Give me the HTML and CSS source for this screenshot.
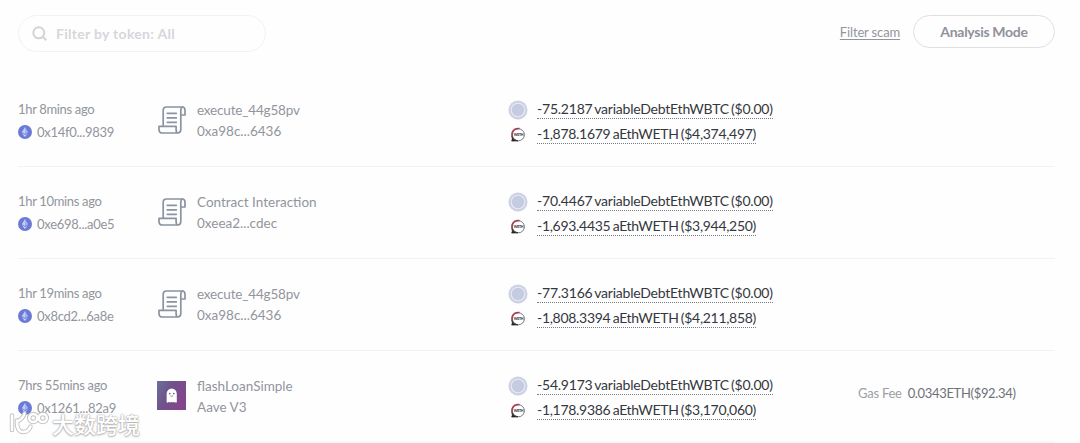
FILE: index.html
```html
<!DOCTYPE html>
<html lang="en">
<head>
<meta charset="utf-8">
<title>Transaction history</title>
<link rel="stylesheet" href="styles.css">
</head>
<body>
<svg class="defs" aria-hidden="true">
  <symbol id="eth" viewBox="0 0 14 14">
    <circle cx="7" cy="7" r="7" fill="#6a7ad6"/>
    <path d="M7 2 3.8 7.2 7 9Z" fill="#c3ccf6"/><path d="M7 2v7l3.2-1.8Z" fill="#a3b2ef"/>
    <path d="M3.9 8.1 7 12V9.9Z" fill="#dde3fc"/><path d="M10.1 8.1 7 12V9.9Z" fill="#b3c0f4"/>
  </symbol>
  <symbol id="scroll" viewBox="0 0 28 28">
    <g fill="none" stroke="#8b93a0" stroke-width="1.7" stroke-linejoin="round" stroke-linecap="round">
      <path d="M5.2 20.2V4.2Q5.2 1 8.4 1H24Q27 1 27 4.3V9H22.8"/>
      <path d="M24.6 1Q22.8 1.5 22.8 4V23.6Q22.8 27 19.6 27H4.6Q1 27 1 23.4V20.4H18.1V23.5Q18.1 27 20 27"/>
      <path d="M9.3 7.3h9M9.3 11.9h9M9.3 16.3h9"/>
    </g>
  </symbol>
  <symbol id="coin" viewBox="0 0 20 20">
    <circle cx="10" cy="10" r="9.5" fill="#ccd1e3"/>
    <circle cx="10" cy="10" r="6.8" fill="#c5cbe0" stroke="#e8eaf4" stroke-width="1.1"/>
  </symbol>
  <symbol id="weth" viewBox="0 0 16 16">
    <circle cx="8.4" cy="7.8" r="6" fill="#fff" stroke="#77777d" stroke-width="1"/>
    <path d="M9.5 1.5Q4 1 2.3 5.2 1.6 7.2 2.1 9.5" fill="none" stroke="#a93a55" stroke-width="1.6"/>
    <path d="M1.9 9.4Q3.4 13.4 8 13.9L1.7 14.1Q2.8 12.8 1.9 9.4Z" fill="#222" stroke="#222" stroke-width=".7"/>
    <text x="8.5" y="9.3" class="weth-label" textLength="9.6" lengthAdjust="spacingAndGlyphs">WETH</text>
  </symbol>
  <symbol id="mark" viewBox="0 0 42 28">
    <path d="M4 6.5V21"/><path d="M16.5 4.5Q15.5 9 9.5 12.5"/><path d="M9 11.5Q8.5 23 15.5 23 20.5 23 22.5 17.5"/>
    <circle cx="25.2" cy="9" r="4"/><circle cx="34.8" cy="9" r="4"/>
  </symbol>
</svg>

<header class="toolbar">
  <div class="search">
    <svg class="search-icon" viewBox="0 0 16 16"><circle cx="6.8" cy="6.8" r="5.5"/><path d="m10.9 10.9 3.4 3.4"/></svg>
    <span>Filter by token: All</span>
  </div>
  <div class="actions">
    <a class="scam">Filter scam</a>
    <button class="mode">Analysis Mode</button>
  </div>
</header>

<main class="list">
  <section class="row">
    <div class="when"><span class="time">1hr 8mins ago</span><span class="hash"><svg><use href="#eth"/></svg>0x14f0...9839</span></div>
    <div class="call"><svg class="kind"><use href="#scroll"/></svg><div class="names"><span class="method">execute_44g58pv</span><span>0xa98c...6436</span></div></div>
    <div class="tokens">
      <div class="token debt"><svg class="coin"><use href="#coin"/></svg><span>-75.2187 variableDebtEthWBTC ($0.00)</span></div>
      <div class="token"><svg class="weth"><use href="#weth"/></svg><span>-1,878.1679 aEthWETH ($4,374,497)</span></div>
    </div>
  </section>
  <section class="row">
    <div class="when"><span class="time">1hr 10mins ago</span><span class="hash"><svg><use href="#eth"/></svg>0xe698...a0e5</span></div>
    <div class="call"><svg class="kind"><use href="#scroll"/></svg><div class="names"><span>Contract Interaction</span><span>0xeea2...cdec</span></div></div>
    <div class="tokens">
      <div class="token debt"><svg class="coin"><use href="#coin"/></svg><span>-70.4467 variableDebtEthWBTC ($0.00)</span></div>
      <div class="token"><svg class="weth"><use href="#weth"/></svg><span>-1,693.4435 aEthWETH ($3,944,250)</span></div>
    </div>
  </section>
  <section class="row">
    <div class="when"><span class="time">1hr 19mins ago</span><span class="hash"><svg><use href="#eth"/></svg>0x8cd2...6a8e</span></div>
    <div class="call"><svg class="kind"><use href="#scroll"/></svg><div class="names"><span class="method">execute_44g58pv</span><span>0xa98c...6436</span></div></div>
    <div class="tokens">
      <div class="token debt"><svg class="coin"><use href="#coin"/></svg><span>-77.3166 variableDebtEthWBTC ($0.00)</span></div>
      <div class="token"><svg class="weth"><use href="#weth"/></svg><span>-1,808.3394 aEthWETH ($4,211,858)</span></div>
    </div>
  </section>
  <section class="row">
    <div class="when"><span class="time">7hrs 55mins ago</span><span class="hash"><svg><use href="#eth"/></svg>0x1261...82a9</span></div>
    <div class="call">
      <svg class="kind protocol" viewBox="0 0 28 28">
        <defs><linearGradient id="aave" x1="0" y1="0" x2="1" y2=".5"><stop offset="0" stop-color="#6b7098"/><stop offset=".5" stop-color="#70518c"/><stop offset="1" stop-color="#84468b"/></linearGradient></defs>
        <path fill="url(#aave)" d="M0 0h28v28H0z"/>
        <path fill="#fff" d="M9.3 20.5V12.5a4.9 5.3 0 0 1 9.8 0V20.5q-1 1-1.8-.4-.8 1.4-1.6 0-.8 1.4-1.6 0-.8 1.4-1.6 0-.8 1.4-1.6 0-.6 1.4-1.6.4Z"/>
        <circle cx="12.3" cy="12.2" r=".8" fill="#70518c"/><circle cx="16.2" cy="12.2" r=".8" fill="#70518c"/>
        <path d="M12.9 14.3q1.3 1 2.6 0" fill="none" stroke="#70518c" stroke-width=".7"/>
      </svg>
      <div class="names"><span>flashLoanSimple</span><span>Aave V3</span></div>
    </div>
    <div class="tokens">
      <div class="token debt"><svg class="coin"><use href="#coin"/></svg><span>-54.9173 variableDebtEthWBTC ($0.00)</span></div>
      <div class="token"><svg class="weth"><use href="#weth"/></svg><span>-1,178.9386 aEthWETH ($3,170,060)</span></div>
    </div>
    <div class="gas"><span class="gas-label">Gas Fee</span><span class="gas-value">0.0343ETH($92.34)</span></div>
  </section>
</main>

<div class="watermark">
  <svg viewBox="0 0 42 28"><use href="#mark" class="mark-edge"/><use href="#mark" class="mark-fill"/></svg>
  <span lang="zh">大数跨境</span>
</div>
</body>
</html>
```
FILE: styles.css
```css
* { box-sizing: border-box; }
body {
  margin: 0;
  height: 443px;
  overflow: hidden;
  background: #fefefe;
  color: #92959c;
  font: 13px/20px Lato, sans-serif;
}
.defs { position: absolute; width: 0; height: 0; }
.weth-label { font: 900 3.8px Lato, sans-serif; text-anchor: middle; fill: #333; }

.toolbar {
  display: flex;
  justify-content: space-between;
  align-items: flex-start;
  height: 75px;
  padding: 15px 25px 0 18px;
}
.search {
  display: flex;
  align-items: center;
  gap: 8px;
  width: 248px;
  height: 37px;
  padding-left: 13px;
  border: 1px solid #f2f2f3;
  border-radius: 19px;
  color: #d6d7da;
  font-size: 14px;
  font-weight: 700;
  letter-spacing: .3px;
}
.search-icon { width: 16px; height: 16px; fill: none; stroke: #d3d4d7; stroke-width: 2; }
.actions { display: flex; align-items: center; gap: 13px; }
.scam { letter-spacing: -.15px; text-decoration: underline; text-underline-offset: 2px; }
.mode {
  width: 142px;
  height: 33px;
  padding: 0;
  border: 1px solid #dfe0e2;
  border-radius: 17px;
  background: none;
  color: #8f929a;
  font: 700 14px/20px Lato, sans-serif;
  letter-spacing: -.3px;
}

.list { padding: 0 25px 0 18px; }
.row {
  display: grid;
  grid-template-columns: 139px 351px 350px 1fr;
  align-items: center;
  height: 92px;
  border-bottom: 1px solid #f2f2f3;
}
.row:last-child { height: 92px; padding-top: 1px; border-bottom-width: 2px; border-color: #f8f8f9; }
.when { display: flex; flex-direction: column; gap: 3px; }
.time { letter-spacing: -.33px; }
.hash { display: flex; align-items: center; gap: 5px; letter-spacing: -.27px; }
.hash svg { width: 14px; height: 14px; }
.call { display: flex; align-items: center; }
.kind { width: 28px; height: 28px; margin: 0 10px 2px 1px; }
.protocol { width: 29px; height: 29px; margin: 0 10px 2px 0; }
.names { display: flex; flex-direction: column; padding-left: 1px; font-size: 13.5px; line-height: 21px; }
.method { letter-spacing: -.18px; }
.tokens { display: flex; flex-direction: column; align-items: flex-start; gap: 6px; padding-top: 3px; }
.token { display: flex; align-items: center; gap: 9px; color: #34373d; font-size: 14px; line-height: 18px; letter-spacing: -.3px; word-spacing: -1px; }
.debt { letter-spacing: -.22px; word-spacing: -1.3px; }
.token span { border-bottom: 1px dotted #777a80; }
.coin { width: 20px; height: 20px; margin: -1px 0; }
.weth { width: 16px; height: 16px; margin: 0 2px; }
.gas { display: flex; gap: 6px; padding-bottom: 8px; color: #6e7178; }
.gas-label { color: #9c9fa5; letter-spacing: -.25px; }
.gas-value { letter-spacing: -.33px; }

.watermark {
  position: absolute;
  left: 8px;
  top: 407px;
  display: flex;
  align-items: center;
  gap: 2px;
  color: #fff;
  font: 500 22px/32px "Noto Sans CJK SC", sans-serif;
  text-shadow: 0 0 1px #aaa, 0 0 2px #aaa, 0 1px 2px #bbb;
}
.watermark svg { width: 42px; height: 28px; fill: none; stroke-linecap: round; }
.mark-edge { stroke: #c2c2c2; stroke-width: 4.4; }
.mark-fill { stroke: #fff; stroke-width: 2.6; }
```
